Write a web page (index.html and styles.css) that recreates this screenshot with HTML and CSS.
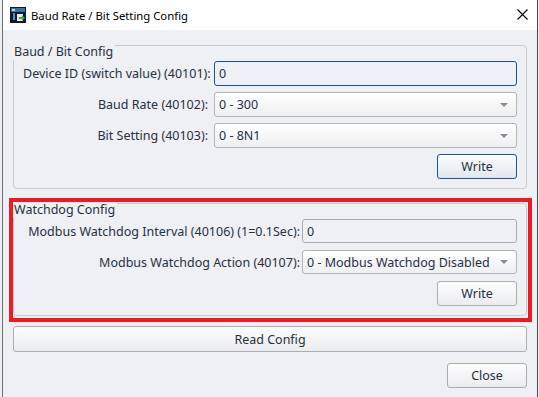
FILE: index.html
```html
<!DOCTYPE html>
<html lang="en">
<head>
  <meta charset="UTF-8">
  <title>Baud Rate / Bit Setting Config</title>
  <link rel="stylesheet" href="styles.css">
</head>
<body>

  <div class="window">
    <div class="titlebar">
      <svg class="app-icon" width="16" height="16" viewBox="0 0 16 16">
        <rect x="0" y="0" width="16" height="16" fill="#0d1b2e"/>
        <rect x="1" y="1" width="14" height="4" fill="#3b6f9c"/>
        <rect x="2" y="2" width="3" height="2" fill="#b8d8f0"/>
        <rect x="3" y="6" width="2" height="7" fill="#5c8fb8"/>
        <path d="M7 7 L13 7 L13 14 L7 14 Z" fill="#e8eef4"/>
        <path d="M9 10 L12 10 L12 8 L15 11 L12 14 L12 12 L9 12 Z" fill="#3aa845"/>
      </svg>
      <span class="title">Baud Rate / Bit Setting Config</span>
      <svg class="close-x" width="11" height="11" viewBox="0 0 11 11">
        <path d="M0.5 0.5 L10.5 10.5 M10.5 0.5 L0.5 10.5" stroke="#000" stroke-width="1.1"/>
      </svg>
    </div>

    <div class="content">
      <div class="group">
        <span class="legend">Baud / Bit Config</span>
        <div class="form-grid">
          <label class="lbl">Device ID (switch value) (40101):</label>
          <div class="textbox focused">0</div>

          <label class="lbl">Baud Rate (40102):</label>
          <div class="combo"><span>0 - 300</span><i class="arrow"></i></div>

          <label class="lbl">Bit Setting (40103):</label>
          <div class="combo"><span>0 - 8N1</span><i class="arrow"></i></div>

          <div class="btn-cell"><button class="btn default">Write</button></div>
        </div>
      </div>

      <div class="group watchdog">
        <span class="legend">Watchdog Config</span>
        <div class="form-grid">
          <label class="lbl">Modbus Watchdog Interval (40106) (1=0.1Sec):</label>
          <div class="textbox">0</div>

          <label class="lbl">Modbus Watchdog Action (40107):</label>
          <div class="combo"><span>0 - Modbus Watchdog Disabled</span><i class="arrow"></i></div>

          <div class="btn-cell"><button class="btn">Write</button></div>
        </div>
        <div class="highlight"></div>
      </div>

      <button class="btn wide">Read Config</button>

      <div class="footer">
        <button class="btn">Close</button>
      </div>
    </div>
  </div>

</body>
</html>
```

FILE: styles.css
```css
body {
  margin: 0;
  padding: 0 0 0 2px;
  font-family: 'Noto Sans', 'DejaVu Sans', sans-serif;
  font-size: 12.5px;
  color: #26303f;
  background-color: #eff0f4;
}
.window {
  width: 534px;
  height: 397px;
  border-left: 1px solid #6f6f6f;
  border-right: 1px solid #4a4a4a;
  background: #eff0f4;
}
.titlebar {
  height: 30px;
  background: white;
  display: flex;
  align-items: center;
  padding-left: 7px;
  color: #000;
}
.app-icon {
  margin-right: 5px;
}
.title {
  flex: 1;
  font-size: 11.3px;
}
.close-x {
  margin-right: 9px;
  margin-top: -1px;
}
.content {
  padding: 15px 10px 0 10px;
}
.group {
  position: relative;
  border: 1px solid #c9cacf;
  border-radius: 4px;
  padding: 15px 9px 9px 9px;
}
.legend {
  position: absolute;
  top: -2px;
  left: -1px;
  height: 16px;
  line-height: 16px;
  padding: 0 2px 0 1px;
  background: #eff0f4;
}
.form-grid {
  display: grid;
  grid-template-columns: 185px 1fr;
  grid-auto-rows: 25px;
  column-gap: 6px;
  row-gap: 6px;
}
.watchdog {
  margin-top: 14px;
  padding-bottom: 10px;
}
.watchdog .form-grid {
  grid-template-columns: 277px 1fr;
  column-gap: 2px;
  grid-auto-rows: 24px;
  row-gap: 7px;
}
.lbl {
  text-align: right;
  align-self: center;
  white-space: nowrap;
}
.textbox {
  border: 1px solid #abacb2;
  border-radius: 3px;
  background: #f0f1f5;
  padding-left: 4px;
  display: flex;
  align-items: center;
}
.textbox.focused {
  border-color: #1d4f8f;
}
.combo {
  border: 1px solid #b3b4b8;
  border-radius: 3px;
  background: linear-gradient(#ffffff, #eeeff1);
  padding: 0 8px 0 4px;
  display: flex;
  align-items: center;
  justify-content: space-between;
}
.arrow {
  width: 0;
  height: 0;
  border-left: 4px solid transparent;
  border-right: 4px solid transparent;
  border-top: 4px solid #8a8c90;
}
.btn-cell {
  grid-column: 2;
  display: flex;
  justify-content: flex-end;
}
.btn {
  font-family: 'Noto Sans', 'DejaVu Sans', sans-serif;
  font-size: 12.5px;
  color: #26303f;
  width: 80px;
  height: 25px;
  padding: 0;
  border: 1px solid #acadb1;
  border-radius: 3px;
  background: linear-gradient(#fdfdfd, #ebecef);
}
.btn.default {
  border-color: #24548f;
  background: linear-gradient(#fbfcfd, #e2e7ee);
}
.highlight {
  position: absolute;
  top: -6px;
  left: -5px;
  right: -6px;
  bottom: -7px;
  border: 4px solid #ed1c24;
  pointer-events: none;
}
.wide {
  display: block;
  width: 100%;
  height: 26px;
  margin-top: 10px;
}
.footer {
  display: flex;
  justify-content: flex-end;
  margin-top: 11px;
}
```
